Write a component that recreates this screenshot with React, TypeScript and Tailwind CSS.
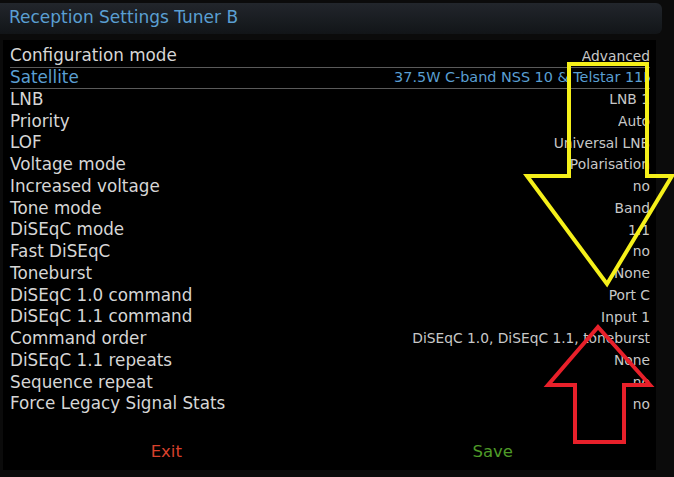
import React from "react";

const rows: [string, string][] = [
  ["Configuration mode", "Advanced"],
  ["Satellite", "37.5W C-band NSS 10 & Telstar 11N"],
  ["LNB", "LNB 1"],
  ["Priority", "Auto"],
  ["LOF", "Universal LNB"],
  ["Voltage mode", "Polarisation"],
  ["Increased voltage", "no"],
  ["Tone mode", "Band"],
  ["DiSEqC mode", "1.1"],
  ["Fast DiSEqC", "no"],
  ["Toneburst", "None"],
  ["DiSEqC 1.0 command", "Port C"],
  ["DiSEqC 1.1 command", "Input 1"],
  ["Command order", "DiSEqC 1.0, DiSEqC 1.1, toneburst"],
  ["DiSEqC 1.1 repeats", "None"],
  ["Sequence repeat", "no"],
  ["Force Legacy Signal Stats", "no"],
];

const SELECTED = 1;

export default function App() {
  return (
    <div
      className="relative w-[674px] h-[477px] overflow-hidden bg-[#0b0b0b]"
      style={{ fontFamily: '"DejaVu Sans", Verdana, sans-serif' }}
    >
      {/* title bar */}
      <div className="pt-[3px] pr-[12px] pb-[6px]">
        <div className="h-[31px] rounded-r-[6px] bg-gradient-to-b from-[#22262c] to-[#121518] flex items-center pl-[9px]">
          <span className="text-[17px] text-[#5a9fd2] -mt-[1px]">Reception Settings Tuner B</span>
        </div>
      </div>

      {/* settings panel */}
      <div className="ml-[3px] w-[653px] h-[430px] bg-black flex flex-col">
        <div className="pt-[5px] pl-[7px] pr-[6px] flex flex-col">
          {rows.map(([label, value], i) => {
            const sel = i === SELECTED;
            return (
              <div
                key={label}
                className={`h-[21.75px] flex items-center justify-between ${
                  sel ? "border-y border-[#5a5a5a] text-[#5a9fd2]" : ""
                }`}
              >
                <span className={`text-[16.8px] ${sel ? "" : "text-[#d6d6d6]"}`}>{label}</span>
                <span className="overflow-hidden whitespace-nowrap flex justify-end">
                  <span className={sel ? "mr-[-4px] text-[14.4px]" : "text-[13.8px] text-[#c8c8c8]"}>
                    {value}
                  </span>
                </span>
              </div>
            );
          })}
        </div>
        <div className="mt-auto mb-[5px] grid grid-cols-2 text-[16.5px]">
          <div className="text-center text-[#d8412c]">Exit</div>
          <div className="text-center text-[#4e9a28]">Save</div>
        </div>
      </div>

      {/* annotation arrows */}
      <svg className="absolute left-0 top-0" width="674" height="477">
        <polygon
          points="569,64 647,64 647,176 672,176 607,284 527,176 569,176"
          fill="none"
          stroke="#f5f01a"
          strokeWidth="4"
        />
        <polygon
          points="598,327 650,385 624,385 624,442 575,442 575,385 548,385"
          fill="none"
          stroke="#e8202a"
          strokeWidth="4"
        />
      </svg>
    </div>
  );
}
